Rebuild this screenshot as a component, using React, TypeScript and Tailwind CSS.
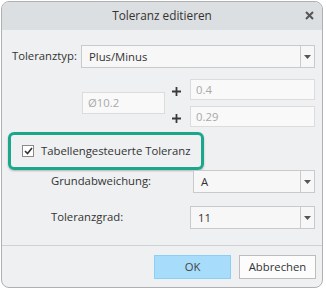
import React from 'react';

function Select({ value, className }: { value: string; className: string }) {
  return (
    <div className={`flex h-[23px] border border-[#c8cacc] bg-[#f7f7f7] ${className}`}>
      <div className="flex-1 pl-[7px] leading-[21px] text-[#333]">{value}</div>
      <div className="flex w-[14px] items-center justify-center border-l border-[#c8cacc]">
        <svg width="7" height="4" viewBox="0 0 7 4">
          <path d="M0 0h7L3.5 4z" fill="#555" />
        </svg>
      </div>
    </div>
  );
}

function Field({ value, className }: { value: string; className: string }) {
  return (
    <div className={`border border-[#dcdcdc] bg-[#f9f9f9] pl-[5px] text-[#a9a9a9] ${className}`}>
      {value}
    </div>
  );
}

function Plus() {
  return (
    <svg width="9" height="9" viewBox="0 0 9 9">
      <path d="M4.5 0v9M0 4.5h9" stroke="#3a3a3a" strokeWidth="1.8" />
    </svg>
  );
}

export default function App() {
  return (
    <div className="h-[289px] w-[326px] bg-white pl-px pt-px font-['Open_Sans',sans-serif] text-[11.3px]">
      <div className="flex h-[287px] w-[322px] flex-col overflow-hidden rounded-[8px] border border-[#aeb0b2] bg-[#eef0f1]">
        <div className="relative flex h-[28px] items-center justify-center bg-[#dcdfe1] text-[11.8px] text-[#333]">
          Toleranz editieren
          <svg className="absolute right-[8px] top-[9px]" width="9" height="9" viewBox="0 0 9 9">
            <path d="M1 1l7 7M8 1L1 8" stroke="#555" strokeWidth="2" />
          </svg>
        </div>

        <div className="mt-[15px] flex items-center">
          <div className="w-[79px] pl-[10px] text-[#333]">Toleranztyp:</div>
          <Select value="Plus/Minus" className="w-[234px]" />
        </div>

        <div className="mt-[11px] flex h-[48px]">
          <div className="w-[80px]" />
          <Field value="Ø10.2" className="mt-[13px] h-[22px] w-[83px] leading-[20px]" />
          <div className="flex w-[25px] flex-col items-center pr-[2px]">
            <div className="mt-[8px]">
              <Plus />
            </div>
            <div className="mt-[18px]">
              <Plus />
            </div>
          </div>
          <div className="flex flex-col gap-[6px]">
            <Field value="0.4" className="h-[21px] w-[125px] leading-[19px]" />
            <Field value="0.29" className="h-[21px] w-[125px] leading-[19px]" />
          </div>
        </div>

        <div className="ml-[6px] mt-[5px] flex h-[38px] w-[196px] items-center rounded-[6px] border-[3px] border-[#1ba78b] pl-[11px] shadow-[0_1px_2px_rgba(0,0,0,0.25)]">
          <div className="flex h-[12px] w-[12px] items-center justify-center border border-[#8a8a8a] bg-white">
            <svg width="9" height="8" viewBox="0 0 9 8">
              <path d="M1 4l2.5 2.5L8 1" fill="none" stroke="#333" strokeWidth="1.6" />
            </svg>
          </div>
          <div className="ml-[7px] text-[#333]">Tabellengesteuerte Toleranz</div>
        </div>

        <div className="flex items-center">
          <div className="w-[191px] pl-[49px] text-[#333]">Grundabweichung:</div>
          <Select value="A" className="h-[22px] w-[122px]" />
        </div>

        <div className="mt-[13px] flex items-center">
          <div className="w-[188px] pl-[49px] text-[#333]">Toleranzgrad:</div>
          <Select value="11" className="h-[22px] w-[125px]" />
        </div>

        <div className="mt-[16px] h-px bg-[#cfd1d3]" />

        <div className="mt-[9px] flex justify-end gap-[8px] pr-[6px]">
          <button className="h-[24px] w-[77px] border border-[#8ccff4] bg-[#a7dcfa] text-[#444]">OK</button>
          <button className="h-[24px] w-[77px] border border-[#bdbdbd] bg-[#fcfcfc] text-[#333]">Abbrechen</button>
        </div>
      </div>
    </div>
  );
}
